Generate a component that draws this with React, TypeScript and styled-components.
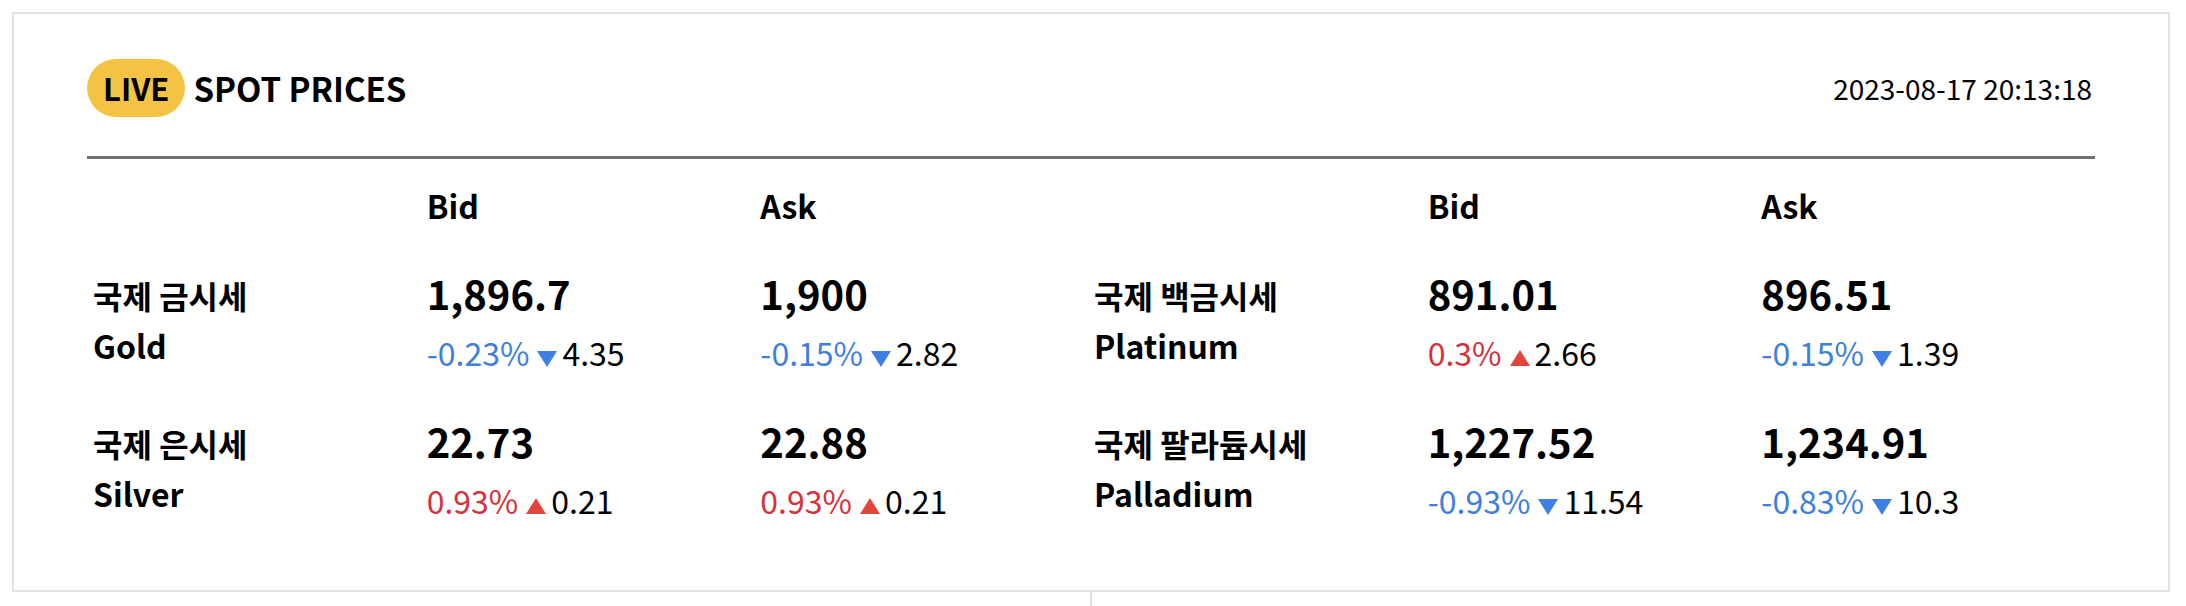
import React from "react";
import styled, { createGlobalStyle } from "styled-components";

const GlobalStyle = createGlobalStyle`
  html, body {
    margin: 0;
    padding: 0;
    background: #ffffff;
  }
  body {
    font-family: "Noto Sans CJK KR", "Noto Sans", sans-serif;
    color: #000;
  }
`;

const Page = styled.div`
  padding: 12px 0 0 12px;
  width: 2158px;
`;

const Card = styled.section`
  box-sizing: border-box;
  width: 2158px;
  height: 580px;
  border: 2px solid #e2e2e2;
  padding: 45px 73px 0 73px;
`;

const Header = styled.header`
  display: flex;
  align-items: center;
  height: 58px;
`;

const LivePill = styled.span`
  display: inline-flex;
  align-items: center;
  justify-content: center;
  height: 58px;
  padding: 0 16px;
  border-radius: 29px;
  background: #f5c344;
  font-size: 31px;
  font-weight: 700;
  line-height: 58px;
  color: #000;
`;

const Title = styled.h1`
  margin: 0 0 0 8px;
  font-size: 33px;
  font-weight: 700;
  line-height: 58px;
  color: #000;
`;

const Timestamp = styled.time`
  margin-left: auto;
  padding-right: 3px;
  font-size: 28px;
  font-weight: 400;
  color: #000;
`;

const Divider = styled.div`
  height: 3px;
  margin-top: 39px;
  background: #707070;
`;

const Grid = styled.div`
  display: grid;
  grid-template-columns: repeat(6, 1fr);
  row-gap: 35px;
  margin-top: 23px;
  padding-left: 6px;
`;

const ColHead = styled.div`
  font-size: 32px;
  font-weight: 700;
  line-height: 46px;
`;

const LabelCell = styled.div`
  display: flex;
  flex-direction: column;
  padding-top: 6.5px;
  font-size: 32px;
  font-weight: 700;
  line-height: 50px;
`;

const PriceCell = styled.div`
  display: flex;
  flex-direction: column;
`;

const Price = styled.span`
  font-size: 40px;
  font-weight: 700;
  line-height: 60px;
`;

const Change = styled.span`
  margin-top: 5px;
  font-size: 32px;
  font-weight: 400;
  line-height: 48px;
  white-space: nowrap;
`;

const Percent = styled.span<{ $up: boolean }>`
  color: ${(p) => (p.$up ? "#d3333c" : "#3f7fdc")};
`;

const Arrow = styled.svg<{ $up: boolean }>`
  display: inline-block;
  width: 20px;
  height: 16px;
  margin: 0 5px 0 8px;
  vertical-align: ${(p) => (p.$up ? "0px" : "-1px")};
`;

const Diff = styled.span`
  color: #000;
`;

const Below = styled.div`
  display: grid;
  grid-template-columns: 1fr 1fr;
  width: 2158px;
  height: 14px;
`;

const BelowPanel = styled.div<{ $divided?: boolean }>`
  border-left: ${(p) => (p.$divided ? "2px solid #e2e2e2" : "none")};
  margin-left: ${(p) => (p.$divided ? "-1px" : "0")};
`;

type Quote = { price: string; pct: string; diff: string; up: boolean };

const Triangle: React.FC<{ up: boolean }> = ({ up }) => (
  <Arrow $up={up} viewBox="0 0 20 16" aria-hidden="true">
    {up ? (
      <polygon points="10,0 20,16 0,16" fill="#e2453b" />
    ) : (
      <polygon points="0,0 20,0 10,16" fill="#3d7fe3" />
    )}
  </Arrow>
);

const PriceBlock: React.FC<{ q: Quote }> = ({ q }) => (
  <PriceCell>
    <Price>{q.price}</Price>
    <Change>
      <Percent $up={q.up}>{q.pct}</Percent>
      <Triangle up={q.up} />
      <Diff>{q.diff}</Diff>
    </Change>
  </PriceCell>
);

type Metal = { ko: string; en: string; bid: Quote; ask: Quote };

const rows: [Metal, Metal][] = [
  [
    {
      ko: "국제 금시세",
      en: "Gold",
      bid: { price: "1,896.7", pct: "-0.23%", diff: "4.35", up: false },
      ask: { price: "1,900", pct: "-0.15%", diff: "2.82", up: false },
    },
    {
      ko: "국제 백금시세",
      en: "Platinum",
      bid: { price: "891.01", pct: "0.3%", diff: "2.66", up: true },
      ask: { price: "896.51", pct: "-0.15%", diff: "1.39", up: false },
    },
  ],
  [
    {
      ko: "국제 은시세",
      en: "Silver",
      bid: { price: "22.73", pct: "0.93%", diff: "0.21", up: true },
      ask: { price: "22.88", pct: "0.93%", diff: "0.21", up: true },
    },
    {
      ko: "국제 팔라듐시세",
      en: "Palladium",
      bid: { price: "1,227.52", pct: "-0.93%", diff: "11.54", up: false },
      ask: { price: "1,234.91", pct: "-0.83%", diff: "10.3", up: false },
    },
  ],
];

const MetalCells: React.FC<{ m: Metal }> = ({ m }) => (
  <>
    <LabelCell>
      <span>{m.ko}</span>
      <span>{m.en}</span>
    </LabelCell>
    <PriceBlock q={m.bid} />
    <PriceBlock q={m.ask} />
  </>
);

export default function App() {
  return (
    <Page>
      <GlobalStyle />
      <Card>
        <Header>
          <LivePill>LIVE</LivePill>
          <Title>SPOT PRICES</Title>
          <Timestamp>2023-08-17 20:13:18</Timestamp>
        </Header>
        <Divider />
        <Grid>
          <div />
          <ColHead>Bid</ColHead>
          <ColHead>Ask</ColHead>
          <div />
          <ColHead>Bid</ColHead>
          <ColHead>Ask</ColHead>
          {rows.map((pair, i) => (
            <React.Fragment key={i}>
              <MetalCells m={pair[0]} />
              <MetalCells m={pair[1]} />
            </React.Fragment>
          ))}
        </Grid>
      </Card>
      <Below>
        <BelowPanel />
        <BelowPanel $divided />
      </Below>
    </Page>
  );
}
